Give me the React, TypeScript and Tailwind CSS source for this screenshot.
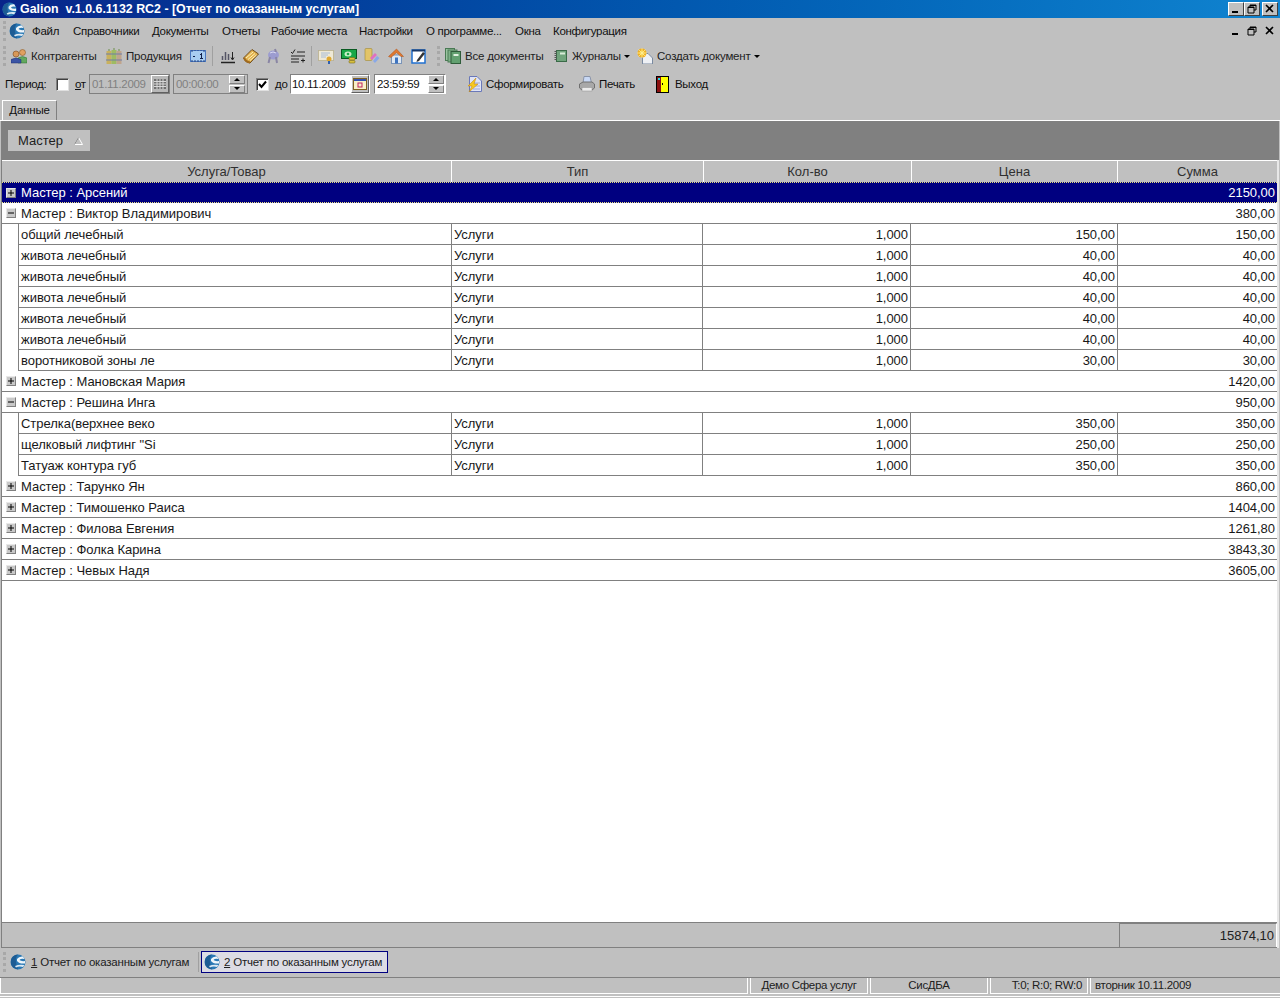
import React from "react";

const font = "font-['Liberation_Sans',Arial,sans-serif]";

function Logo({ s = 16 }: { s?: number }) {
  return (
    <svg width={s} height={s} viewBox="0 0 16 16" className="shrink-0">
      <circle cx="8" cy="8" r="7.5" fill="#2a78b4" />
      <path d="M1 6 Q2 1 8 .5 Q5 4 6 8 Q6 11 8 15.500 Q2 14 1 10 Z" fill="#1d5c94" />
      <path d="M7 5 Q9 2 13 2.500 L14.500 5 Q11 4 9.500 6 Q11 7.500 15 7 L15 9.500 Q9 10 7 7 Z" fill="#eef5fa" />
      <path d="M5 12 Q9 10 14.500 11 L13 13 Q9 12 6 13.500 Z" fill="#dce9f3" />
    </svg>
  );
}

function Ic({ children }: { children: React.ReactNode }) {
  return (
    <svg width="16" height="16" viewBox="0 0 16 16" className="shrink-0">
      {children}
    </svg>
  );
}

const Users = () => (
  <Ic>
    <circle cx="11.500" cy="4.500" r="3" fill="#e0a060" stroke="#8a5a28" strokeWidth="0.600" />
    <path d="M7 15 V10 Q11.500 7 16 10 V15 Z" fill="#62a85e" stroke="#2f6e30" strokeWidth="0.500" />
    <circle cx="5" cy="6" r="3" fill="#d89858" stroke="#7a4a20" strokeWidth="0.600" />
    <path d="M0 15 V11.500 Q5 8.500 10 11.500 V15 Z" fill="#3b55a5" stroke="#1e2e70" strokeWidth="0.500" />
  </Ic>
);
const Books = () => (
  <Ic>
    <rect x="0.500" y="3" width="5" height="13" fill="#c9b15e" />
    <rect x="5.500" y="2" width="5" height="14" fill="#9ebb62" />
    <rect x="10.500" y="3" width="5" height="13" fill="#c0a48c" />
    <path d="M0 6h16M0 12h16" stroke="#6e7fa8" strokeWidth="1.200" />
    <path d="M3 1v2M8 0v2M13 1v2" stroke="#88a070" strokeWidth="1.500" />
  </Ic>
);
const Ruler = () => (
  <Ic>
    <rect x="0.500" y="2.500" width="15" height="11" fill="#a8cdf0" stroke="#4a78c0" />
    <path d="M2 2v2M5 2v1M8 2v1M11 2v1M14 2v2M2 12v2M5 12v2M8 12v2M11 12v2M14 12v2" stroke="#24427e" />
    <path d="M11 5h1v5h-1zM10 6h1v1h-1zM10 10h3v1h-3zM3 8h2v1H3z" fill="#10204a" />
  </Ic>
);
const Bars = () => (
  <Ic>
    <path d="M1 14.500h14" stroke="#222" strokeWidth="1.500" />
    <path d="M2.500 12V8M5.500 12V4M8.500 12V6" stroke="#556" strokeWidth="1.500" />
    <path d="M12.500 4v7M11 9.500l1.500 2.500 1.500-2.500" stroke="#222" fill="none" />
  </Ic>
);
const Notes = () => (
  <Ic>
    <path d="M0.500 10 L9 1.500 L15.500 6 L7 15 Q2 14.500 0.500 10 Z" fill="#e2b24e" stroke="#6e4c1e" />
    <path d="M3 10 L10 4M5 11.500 L12 5.500M7 12.500 L13.500 7" stroke="#fff0b8" />
    <path d="M1 10 Q3 14 7 14.500" fill="none" stroke="#a06a20" strokeWidth="2" />
  </Ic>
);
const Plug = () => (
  <Ic>
    <ellipse cx="7.500" cy="7" rx="5.500" ry="4.500" fill="#9c9cd0" />
    <path d="M9 1 L10 4M4 9 L2.500 15M10 9 L11 15" stroke="#8a86a4" strokeWidth="2" />
    <path d="M4 5 Q7 3 10 5" stroke="#d8d8f0" fill="none" />
  </Ic>
);
const Signs = () => (
  <Ic>
    <path d="M1 4l1.500 1.500L5 1.500M7 4h8M1 8h14M1 11h8M1 14h8" stroke="#222" fill="none" />
    <path d="M11 12.500h4M13 10.500v4" stroke="#222" />
  </Ic>
);
const Cert = () => (
  <Ic>
    <rect x="0.500" y="2.500" width="15" height="10" fill="#efe9d6" stroke="#a89a68" strokeDasharray="1 1" />
    <path d="M3 5h9M3 7h7M3 9h5" stroke="#a8bcd8" />
    <circle cx="11" cy="11" r="2.500" fill="#e0a830" />
    <rect x="10" y="13" width="2" height="3" fill="#3060b0" />
  </Ic>
);
const Money = () => (
  <Ic>
    <rect x="0.500" y="1.500" width="15" height="9" fill="#18a848" stroke="#0a5a22" />
    <ellipse cx="7" cy="6" rx="3.500" ry="2.500" fill="#c8f0c8" />
    <circle cx="7" cy="6" r="1.300" fill="#18a848" />
    <rect x="8" y="9.500" width="6" height="2.500" rx="1" fill="#d8c040" stroke="#7a6a10" strokeWidth="0.600" />
    <rect x="8" y="12.500" width="6" height="2.500" rx="1" fill="#d8c040" stroke="#7a6a10" strokeWidth="0.600" />
  </Ic>
);
const Paint = () => (
  <Ic>
    <rect x="1" y="0.500" width="7" height="12" rx="1" fill="#e2c468" stroke="#a08a38" strokeWidth="0.600" />
    <path d="M6 10 L11 5 L13 7 L8 12 Z" fill="#e070c0" />
    <path d="M9 13 L13 8 L15.500 10 L11 15 Z" fill="#88a8e8" />
  </Ic>
);
const House = () => (
  <Ic>
    <rect x="3.500" y="7" width="10" height="8.500" fill="#dfe8f2" stroke="#7a94b8" />
    <path d="M0.500 8.500 L8.500 1 L15.500 8.500 L13 8.500 L8.500 4.500 L3 9.500 Z" fill="#e07830" stroke="#a85018" strokeWidth="0.500" />
    <rect x="7" y="9.500" width="3" height="6" fill="#3e74c0" />
  </Ic>
);
const Pad = () => (
  <Ic>
    <rect x="1" y="2" width="13" height="13" fill="#fff" stroke="#2070d0" strokeWidth="1.500" />
    <rect x="1" y="1.500" width="13" height="2" fill="#183868" />
    <path d="M6 12 L12 4 L14 5.500 L8 13 L5.500 14 Z" fill="#333" />
  </Ic>
);
const GreenDocs = () => (
  <Ic>
    <rect x="0.500" y="0.500" width="9" height="12" fill="#9ac4a0" stroke="#4a7a54" />
    <rect x="3" y="2" width="9" height="12" fill="#7eb088" stroke="#4a7a54" />
    <rect x="6" y="3.500" width="9.500" height="12" fill="#62a070" stroke="#2f5c3a" />
    <rect x="8.500" y="6" width="5" height="2" fill="#e0f0e0" />
  </Ic>
);
const GreenBook = () => (
  <Ic>
    <rect x="3.500" y="2.500" width="10" height="11" fill="#70a47c" stroke="#3a6a48" />
    <path d="M2.500 3v10" stroke="#555" strokeWidth="2" strokeDasharray="1 1" />
    <rect x="7" y="4.500" width="5" height="2" fill="#d8ecd8" />
  </Ic>
);
const NewDoc = () => (
  <Ic>
    <path d="M5.500 5.500 H11 L15.500 10 V16 H5.500 Z" fill="#eef0f4" stroke="#7a8aa0" />
    <circle cx="5" cy="5" r="4.500" fill="#f0b020" />
    <circle cx="5" cy="5" r="2.500" fill="#f8d040" />
    <path d="M5 0v10M0 5h10M1.500 1.500l7 7M8.500 1.500l-7 7" stroke="#fff0a0" strokeWidth="0.700" />
  </Ic>
);
const Bolt = () => (
  <Ic>
    <path d="M2.500 0.500 H10 L14.500 5 V15.500 H2.500 Z" fill="#dfe4f6" stroke="#6a78b8" />
    <path d="M5 7h8M5 10h8M6 13h7" stroke="#a0a8d8" />
    <path d="M9 2 L1 10 H5 L2 16 L11 8 H7 Z" fill="#f6c820" stroke="#c08010" strokeWidth="0.500" />
  </Ic>
);
const Printer = () => (
  <Ic>
    <path d="M5 0.500 H11 L12.500 7 H4 Z" fill="#c8d8f4" stroke="#8a94a8" />
    <path d="M0.500 8 L4 6 H13 L15.500 8 V12 L13 14 H3 L0.500 12 Z" fill="#a8a8a8" stroke="#707070" />
    <rect x="3" y="11.500" width="10" height="3.500" fill="#ececec" stroke="#909090" strokeWidth="0.500" />
  </Ic>
);
const Door = () => (
  <svg width="13" height="17" viewBox="0 0 13 17" className="shrink-0">
    <rect width="13" height="17" fill="#000" />
    <rect x="1" y="1" width="4" height="15" fill="#8a1010" />
    <path d="M5 1 H12 V16 H5 Z" fill="#ffff00" />
    <rect x="2" y="2" width="2" height="2" fill="#20d8e8" />
    <rect x="6" y="7" width="1" height="2" fill="#000" />
  </svg>
);

const Sep = ({ cls }: { cls: string }) => <div className={`w-px h-[20px] bg-[#a0a0a0] shrink-0 ${cls}`} />;
const Grip = ({ cls }: { cls: string }) => (
  <div className={`w-[3px] h-[20px] shrink-0 border-l-[3px] border-dotted border-[#a8a8a8] ${cls}`} />
);
const Caret = ({ cls }: { cls: string }) => (
  <div className={`w-0 h-0 shrink-0 border-x-[3px] border-t-[3px] border-x-transparent border-t-black ${cls}`} />
);
const Txt = ({ w, cls = "", children }: { w: string; cls?: string; children: React.ReactNode }) => (
  <span className={`whitespace-nowrap shrink-0 pt-[2px] ${w} ${cls}`}>{children}</span>
);

const Check = ({ on, cls }: { on: boolean; cls: string }) => (
  <div className={`w-[13px] h-[13px] shrink-0 bg-white border border-t-[#808080] border-l-[#808080] border-b-[#e0e0e0] border-r-[#e0e0e0] shadow-[inset_1px_1px_0_#404040] flex items-center justify-center ${cls}`}>
    {on && (
      <svg width="9" height="9" viewBox="0 0 9 9">
        <path d="M1 4 L3.500 7 L8 1.500" fill="none" stroke="#000" strokeWidth="2" />
      </svg>
    )}
  </div>
);

const Spin = () => (
  <div className="flex flex-col w-[16px] h-[18px] shrink-0 gap-px">
    {[0, 1].map((i) => (
      <div key={i} className="flex-1 flex items-center justify-center bg-[#c0c0c0] border border-t-white border-l-white border-b-[#808080] border-r-[#808080]">
        <div className={`w-0 h-0 border-x-[3px] border-x-transparent ${i === 0 ? "border-b-[3px] border-b-black" : "border-t-[3px] border-t-black"}`} />
      </div>
    ))}
  </div>
);

const WinBtn = ({ kind, framed }: { kind: "min" | "max" | "close"; framed: boolean }) => (
  <div className={`w-[16px] h-[14px] flex items-center justify-center shrink-0 ${framed ? "bg-[#c0c0c0] border border-t-white border-l-white border-b-[#404040] border-r-[#404040]" : ""}`}>
    <svg width="10" height="10" viewBox="0 0 10 10">
      {kind === "min" && <rect x="1" y="7" width="6" height="2" fill="#000" />}
      {kind === "max" && (
        <path d="M3 1h6v5H7M3 1v2M1 3h6v6H1zM1 3.500h6M3 1.500h6" fill="none" stroke="#000" strokeWidth="1" />
      )}
      {kind === "close" && <path d="M1 1 L8 8 M8 1 L1 8" stroke="#000" strokeWidth="1.600" />}
    </svg>
  </div>
);

type Row =
  | { t: "g"; name: string; sum: string; open?: boolean; sel?: boolean }
  | { t: "d"; name: string; qty: string; price: string; sum: string };

const rows: Row[] = [
  { t: "g", name: "Мастер : Арсений", sum: "2150,00", sel: true },
  { t: "g", name: "Мастер : Виктор Владимирович", sum: "380,00", open: true },
  { t: "d", name: "общий лечебный", qty: "1,000", price: "150,00", sum: "150,00" },
  { t: "d", name: "живота лечебный", qty: "1,000", price: "40,00", sum: "40,00" },
  { t: "d", name: "живота лечебный", qty: "1,000", price: "40,00", sum: "40,00" },
  { t: "d", name: "живота лечебный", qty: "1,000", price: "40,00", sum: "40,00" },
  { t: "d", name: "живота лечебный", qty: "1,000", price: "40,00", sum: "40,00" },
  { t: "d", name: "живота лечебный", qty: "1,000", price: "40,00", sum: "40,00" },
  { t: "d", name: "воротниковой зоны ле", qty: "1,000", price: "30,00", sum: "30,00" },
  { t: "g", name: "Мастер : Мановская Мария", sum: "1420,00" },
  { t: "g", name: "Мастер : Решина Инга", sum: "950,00", open: true },
  { t: "d", name: "Стрелка(верхнее веко", qty: "1,000", price: "350,00", sum: "350,00" },
  { t: "d", name: "щелковый лифтинг \"Si", qty: "1,000", price: "250,00", sum: "250,00" },
  { t: "d", name: "Татуаж контура губ", qty: "1,000", price: "350,00", sum: "350,00" },
  { t: "g", name: "Мастер : Тарунко Ян", sum: "860,00" },
  { t: "g", name: "Мастер : Тимошенко Раиса", sum: "1404,00" },
  { t: "g", name: "Мастер : Филова Евгения", sum: "1261,80" },
  { t: "g", name: "Мастер : Фолка Карина", sum: "3843,30" },
  { t: "g", name: "Мастер : Чевых Надя", sum: "3605,00" },
];

const Expander = ({ open }: { open?: boolean }) => (
  <div className="w-[10px] h-[10px] ml-[4px] shrink-0 bg-[#c8c8c8] border border-t-[#e8e8e8] border-l-[#e8e8e8] border-b-[#808080] border-r-[#808080] flex items-center justify-center">
    <svg width="6" height="6" viewBox="0 0 6 6">
      <path d={open ? "M0 3h6" : "M0 3h6M3 0v6"} stroke="#000" strokeWidth="1" />
    </svg>
  </div>
);

const menus: [string, string][] = [
  ["Файл", "w-[41px]"],
  ["Справочники", "w-[79px]"],
  ["Документы", "w-[70px]"],
  ["Отчеты", "w-[49px]"],
  ["Рабочие места", "w-[88px]"],
  ["Настройки", "w-[67px]"],
  ["О программе...", "w-[89px]"],
  ["Окна", "w-[38px]"],
  ["Конфигурация", "w-[80px]"],
];

export default function App() {
  return (
    <div className={`${font} w-[1280px] h-[998px] bg-[#c0c0c0] flex flex-col overflow-hidden text-[11.5px] text-black`}>
      {/* Title */}
      <div className="h-[18px] shrink-0 flex items-center bg-gradient-to-r from-[#08248a] to-[#1084d0] pl-[2px] pr-[2px]">
        <Logo s={15} />
        <span className="ml-[3px] text-white font-bold text-[12.400px] whitespace-nowrap">
          Galion&nbsp; v.1.0.6.1132 RC2 - [Отчет по оказанным услугам]
        </span>
        <div className="ml-auto flex items-center">
          <WinBtn kind="min" framed />
          <WinBtn kind="max" framed />
          <div className="w-[2px]" />
          <WinBtn kind="close" framed />
        </div>
      </div>

      {/* Menu */}
      <div className="h-[26px] shrink-0 flex items-center">
        <Grip cls="ml-[3px]" />
        <div className="ml-[3px]"><Logo /></div>
        <div className="ml-[7px] flex items-center text-[#101010] tracking-[-0.3px]">
          {menus.map(([m, w]) => (
            <Txt key={m} w={w}>{m}</Txt>
          ))}
        </div>
        <div className="ml-auto flex items-center pr-[2px]">
          <WinBtn kind="min" framed={false} />
          <WinBtn kind="max" framed={false} />
          <div className="w-[2px]" />
          <WinBtn kind="close" framed={false} />
        </div>
      </div>

      {/* Toolbar */}
      <div className="h-[24px] shrink-0 flex items-center text-[#202020] tracking-[-0.2px]">
        <Grip cls="ml-[3px]" />
        <div className="ml-[5px]"><Users /></div>
        <Txt w="w-[66px]" cls="ml-[4px]">Контрагенты</Txt>
        <div className="ml-[9px]"><Books /></div>
        <Txt w="w-[55px]" cls="ml-[4px]">Продукция</Txt>
        <div className="ml-[9px]"><Ruler /></div>
        <Sep cls="ml-[6px]" />
        <div className="ml-[7px]"><Bars /></div>
        <div className="ml-[7px]"><Notes /></div>
        <div className="ml-[7px]"><Plug /></div>
        <div className="ml-[8px]"><Signs /></div>
        <Sep cls="ml-[5px]" />
        <div className="ml-[6px]"><Cert /></div>
        <div className="ml-[7px]"><Money /></div>
        <div className="ml-[7px]"><Paint /></div>
        <div className="ml-[8px]"><House /></div>
        <div className="ml-[7px]"><Pad /></div>
        <Grip cls="ml-[10px]" />
        <div className="ml-[5px]"><GreenDocs /></div>
        <Txt w="w-[77px]" cls="ml-[4px]">Все документы</Txt>
        <div className="ml-[11px]"><GreenBook /></div>
        <Txt w="w-[47px]" cls="ml-[3px]">Журналы</Txt>
        <Caret cls="ml-[5px]" />
        <div className="ml-[7px]"><NewDoc /></div>
        <Txt w="w-[93px]" cls="ml-[4px]">Создать документ</Txt>
        <Caret cls="ml-[4px]" />
      </div>

      {/* Period */}
      <div className="h-[32px] shrink-0 flex items-center text-[#101010] tracking-[-0.3px]">
        <Txt w="w-[41px]" cls="ml-[5px]">Период:</Txt>
        <Check on={false} cls="ml-[10px]" />
        <Txt w="w-[12px]" cls="ml-[6px]"><u>о</u>т</Txt>
        <div className="ml-[2px] w-[81px] h-[20px] shrink-0 flex items-center justify-between border border-[#808080] bg-[#c0c0c0] pl-[2px] text-[#808080]">
          <span className="pt-[2px]">01.11.2009</span>
          <div className="w-[18px] h-[18px] flex items-center justify-center bg-[#b8b8b8] border border-t-white border-l-white border-b-[#606060] border-r-[#606060]">
            <svg width="12" height="10" viewBox="0 0 12 10">
              <rect width="12" height="10" fill="#707070" />
              <path d="M0 2.500h12M0 5h12M0 7.500h12M3 0v10M6 0v10M9 0v10" stroke="#d8d8d8" strokeWidth="1" />
            </svg>
          </div>
        </div>
        <div className="ml-[3px] w-[75px] h-[20px] shrink-0 flex items-center justify-between border border-[#808080] pl-[2px] pr-[2px] text-[#808080]">
          <span className="pt-[2px]">00:00:00</span>
          <Spin />
        </div>
        <Check on cls="ml-[8px]" />
        <Txt w="w-[12px]" cls="ml-[6px]"><u>д</u>о</Txt>
        <div className="ml-[3px] w-[80px] h-[20px] shrink-0 flex items-center justify-between bg-white border border-[#808080] pl-[1px] border-b-white border-r-white">
          <span className="pt-[2px]">10.11.2009</span>
          <div className="w-[18px] h-[18px] flex items-center justify-center bg-[#c0c0c0] border border-t-white border-l-white border-b-[#606060] border-r-[#606060]">
            <svg width="14" height="12" viewBox="0 0 14 12">
              <rect x="0.500" y="0.500" width="13" height="11" fill="#f8f0c8" stroke="#806020" />
              <rect x="1" y="1" width="12" height="2" fill="#3050b0" />
              <rect x="5" y="5" width="4" height="4" fill="none" stroke="#c02060" />
            </svg>
          </div>
        </div>
        <div className="ml-[4px] w-[72px] h-[20px] shrink-0 flex items-center justify-between bg-white border border-[#808080] border-b-white border-r-white pl-[2px] pr-[1px]">
          <span className="pt-[2px]">23:59:59</span>
          <Spin />
        </div>
        <div className="ml-[21px]"><Bolt /></div>
        <Txt w="w-[76px]" cls="ml-[3px]">Сформировать</Txt>
        <div className="ml-[17px]"><Printer /></div>
        <Txt w="w-[36px]" cls="ml-[4px]">Печать</Txt>
        <div className="ml-[21px]"><Door /></div>
        <Txt w="w-[33px]" cls="ml-[6px]">Выход</Txt>
      </div>

      {/* Tab */}
      <div className="h-[20px] shrink-0 flex items-end pl-[2px]">
        <div className="h-[20px] w-[55px] flex items-center justify-center bg-[#c0c0c0] border-t border-l border-white border-r border-r-[#808080] tracking-[-0.2px] text-[#101010]">
          Данные
        </div>
      </div>

      {/* Panel */}
      <div className="flex-1 min-h-0 flex flex-col border-t border-white pl-[1px] pr-[1px]">
        <div className="h-[39px] shrink-0 bg-[#808080] flex items-center pl-[7px]">
          <div className="w-[82px] h-[21px] bg-[#c0c0c0] flex items-center pl-[10px] pt-[1px] text-[13px] text-[#202020] justify-between pr-[7px]">
            <span>Мастер</span>
            <svg width="9" height="8" viewBox="0 0 9 8">
              <path d="M4.500 0.500 L8.500 7.500 H0.500 Z" fill="none" stroke="#ffffff" />
              <path d="M4.500 0.500 L0.500 7.500" stroke="#808080" />
            </svg>
          </div>
        </div>

        <div className="flex-1 min-h-0 bg-white flex flex-col border-l border-[#808080] border-r-2 border-r-[#e8e8e8]">
          {/* Header */}
          <div className="h-[22px] shrink-0 flex bg-[#c0c0c0] border-t border-white text-[13px] text-[#303030]">
            {[
              ["Услуга/Товар", "w-[450px]"],
              ["Тип", "w-[252px]"],
              ["Кол-во", "w-[208px]"],
              ["Цена", "w-[206px]"],
              ["Сумма", "flex-1"],
            ].map(([h, w], i) => (
              <div key={h} className={`${w} flex items-center justify-center ${i < 4 ? "border-r border-white" : ""}`}>
                {h}
              </div>
            ))}
          </div>

          {/* Rows */}
          <div className="flex-1 min-h-0 text-[13px] leading-none tracking-[-0.04px]">
            {rows.map((r, i) =>
              r.t === "g" ? (
                <div
                  key={i}
                  className={`h-[21px] flex items-center ${
                    r.sel
                      ? "bg-[#000080] text-white border-y border-dotted border-[#e8e080]"
                      : "border-b border-[#808080] text-[#181818]"
                  }`}
                >
                  <Expander open={r.open} />
                  <span className="ml-[5px] whitespace-nowrap">{r.name}</span>
                  <span className="ml-auto pr-[2px]">{r.sum}</span>
                </div>
              ) : (
                <div key={i} className="h-[21px] flex pl-[16px] text-[#181818]">
                  <div className="flex-1 flex border-l border-b border-[#808080]">
                    <div className="w-[433px] flex items-center pl-[2px] border-r border-[#808080] whitespace-nowrap">{r.name}</div>
                    <div className="w-[251px] flex items-center pl-[2px] border-r border-[#808080]">Услуги</div>
                    <div className="w-[208px] flex items-center justify-end pr-[2px] border-r border-[#808080]">{r.qty}</div>
                    <div className="w-[207px] flex items-center justify-end pr-[2px] border-r border-[#808080]">{r.price}</div>
                    <div className="flex-1 flex items-center justify-end pr-[2px]">{r.sum}</div>
                  </div>
                </div>
              )
            )}
          </div>

          {/* Footer */}
          <div className="h-[26px] shrink-0 flex bg-[#c0c0c0] border-t border-b border-[#808080] text-[13px] text-[#202020]">
            <div className="ml-auto w-[158px] flex items-center justify-end pr-[2px] border-l border-t border-[#808080] border-r border-r-white">
              15874,10
            </div>
          </div>
        </div>
      </div>

      {/* Task bar */}
      <div className="h-[29px] shrink-0 flex items-center pb-[2px] tracking-[-0.2px] text-[#202020]">
        <Grip cls="ml-[3px]" />
        <div className="ml-[4px]"><Logo /></div>
        <span className="ml-[5px] pt-[2px] w-[160px] shrink-0 whitespace-nowrap"><u>1</u> Отчет по оказанным услугам</span>
        <Sep cls="ml-[7px]" />
        <div className="ml-[2px] w-[187px] h-[22px] shrink-0 flex items-center bg-[#dcdce4] border border-[#000080] pl-[2px]">
          <Logo />
          <span className="ml-[4px] pt-[2px] whitespace-nowrap"><u>2</u> Отчет по оказанным услугам</span>
        </div>
      </div>

      {/* Status bar */}
      <div className="h-[21px] shrink-0 flex flex-col border-t border-[#808080] text-[#202020] tracking-[-0.3px]">
        <div className="h-[16px] shrink-0 flex">
          <div className="w-[748px] border-l border-[#808080] border-r border-b border-white" />
          <div className="ml-[2px] w-[118px] flex items-center justify-center border-l border-[#808080] border-r border-b border-white">Демо Сфера услуг</div>
          <div className="ml-[2px] w-[118px] flex items-center justify-center border-l border-[#808080] border-r border-b border-white">СисДБА</div>
          <div className="ml-[2px] w-[98px] flex items-center justify-end pr-[5px] border-l border-[#808080] border-r border-b border-white">T:0; R:0; RW:0</div>
          <div className="ml-[2px] flex-1 flex items-center pl-[4px] border-l border-[#808080] border-b border-white">вторник 10.11.2009</div>
        </div>
        <div className="h-[3px] shrink-0 border-b border-white" />
      </div>
    </div>
  );
}
